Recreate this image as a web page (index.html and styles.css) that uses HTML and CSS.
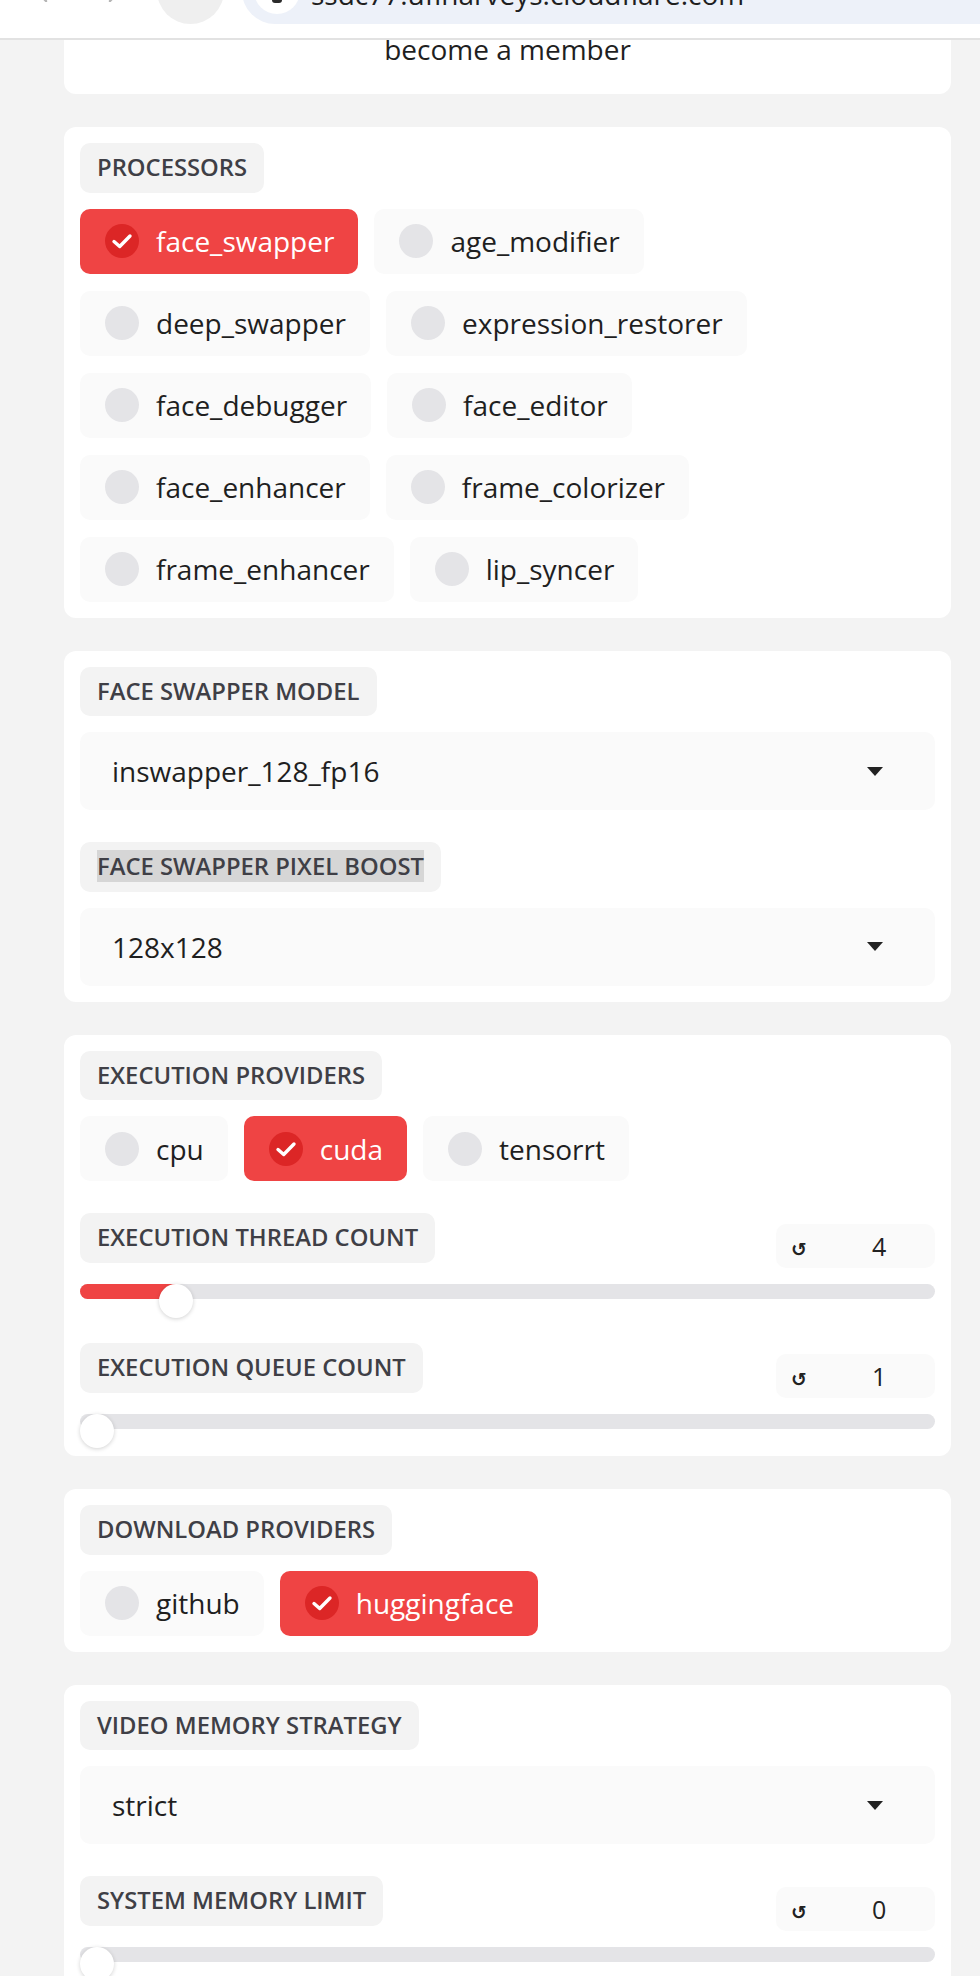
FILE: index.html
```html
<!DOCTYPE html>
<html lang="en">
<head>
<meta charset="utf-8">
<title>FaceFusion</title>
<link rel="stylesheet" href="styles.css">
</head>
<body>
<div class="chrome">
  <svg class="nav nav-back" width="12" height="20" viewBox="0 0 12 20"><path d="M10 1 L2 10 L10 19" fill="none" stroke="#b5b5b5" stroke-width="2.5" stroke-linecap="round" stroke-linejoin="round"/></svg>
  <svg class="nav nav-fwd" width="12" height="20" viewBox="0 0 12 20"><path d="M2 1 L10 10 L2 19" fill="none" stroke="#b5b5b5" stroke-width="2.5" stroke-linecap="round" stroke-linejoin="round"/></svg>
  <div class="reload"><span class="reload-icon"></span></div>
  <div class="urlbar">
    <div class="site-icon"><span class="site-glyph"></span></div>
    <span class="url-text">ssdc77.ufinarveys.cloudflare.com</span>
  </div>
</div>

<main class="page">
  <section class="card card-member">
    <p class="member">become a member</p>
  </section>

  <section class="card">
    <div class="label">PROCESSORS</div>
    <div class="rows">
      <div class="row">
        <div class="choice selected"><span class="dot"><svg width="22" height="22" viewBox="0 0 22 22"><path d="M3 11.5 L8.7 16.5 L19 6" fill="none" stroke="#fff" stroke-width="3.4" stroke-linecap="round" stroke-linejoin="round"/></svg></span><span>face_swapper</span></div>
        <div class="choice"><span class="dot"></span><span>age_modifier</span></div>
      </div>
      <div class="row">
        <div class="choice"><span class="dot"></span><span>deep_swapper</span></div>
        <div class="choice"><span class="dot"></span><span>expression_restorer</span></div>
      </div>
      <div class="row">
        <div class="choice"><span class="dot"></span><span>face_debugger</span></div>
        <div class="choice"><span class="dot"></span><span>face_editor</span></div>
      </div>
      <div class="row">
        <div class="choice"><span class="dot"></span><span>face_enhancer</span></div>
        <div class="choice"><span class="dot"></span><span>frame_colorizer</span></div>
      </div>
      <div class="row">
        <div class="choice"><span class="dot"></span><span>frame_enhancer</span></div>
        <div class="choice"><span class="dot"></span><span>lip_syncer</span></div>
      </div>
    </div>
  </section>

  <section class="card">
    <div class="label">FACE SWAPPER MODEL</div>
    <div class="dropdown"><span>inswapper_128_fp16</span><span class="caret"></span></div>
    <div class="label label-gap"><span class="hl">FACE SWAPPER PIXEL BOOST</span></div>
    <div class="dropdown"><span>128x128</span><span class="caret"></span></div>
  </section>

  <section class="card card-tight">
    <div class="label">EXECUTION PROVIDERS</div>
    <div class="rows">
      <div class="row">
        <div class="choice"><span class="dot"></span><span>cpu</span></div>
        <div class="choice selected"><span class="dot"><svg width="22" height="22" viewBox="0 0 22 22"><path d="M3 11.5 L8.7 16.5 L19 6" fill="none" stroke="#fff" stroke-width="3.4" stroke-linecap="round" stroke-linejoin="round"/></svg></span><span>cuda</span></div>
        <div class="choice"><span class="dot"></span><span>tensorrt</span></div>
      </div>
    </div>
    <div class="slider-block first">
      <div class="slider-head">
        <div class="label">EXECUTION THREAD COUNT</div>
        <div class="numbox"><span class="reset">↺</span><span class="num">4</span></div>
      </div>
      <div class="range">
        <div class="track"><div class="fill" style="width:96px"></div></div>
        <div class="thumb" style="left:79px"></div>
      </div>
    </div>
    <div class="slider-block">
      <div class="slider-head">
        <div class="label">EXECUTION QUEUE COUNT</div>
        <div class="numbox"><span class="reset">↺</span><span class="num">1</span></div>
      </div>
      <div class="range">
        <div class="track"><div class="fill" style="width:0px"></div></div>
        <div class="thumb" style="left:0px"></div>
      </div>
    </div>
  </section>

  <section class="card">
    <div class="label">DOWNLOAD PROVIDERS</div>
    <div class="rows">
      <div class="row">
        <div class="choice"><span class="dot"></span><span>github</span></div>
        <div class="choice selected"><span class="dot"><svg width="22" height="22" viewBox="0 0 22 22"><path d="M3 11.5 L8.7 16.5 L19 6" fill="none" stroke="#fff" stroke-width="3.4" stroke-linecap="round" stroke-linejoin="round"/></svg></span><span>huggingface</span></div>
      </div>
    </div>
  </section>

  <section class="card">
    <div class="label">VIDEO MEMORY STRATEGY</div>
    <div class="dropdown"><span>strict</span><span class="caret"></span></div>
    <div class="slider-block first">
      <div class="slider-head">
        <div class="label">SYSTEM MEMORY LIMIT</div>
        <div class="numbox"><span class="reset">↺</span><span class="num">0</span></div>
      </div>
      <div class="range">
        <div class="track"><div class="fill" style="width:0px"></div></div>
        <div class="thumb" style="left:0px"></div>
      </div>
    </div>
  </section>
</main>
</body>
</html>
```

FILE: styles.css
```css
* { box-sizing: border-box; }

html, body {
  margin: 0;
  padding: 0;
  background: #f3f3f3;
}

body {
  font-family: "Open Sans", "Noto Sans", sans-serif;
  color: #1f1f1f;
}

/* ---------- browser chrome overlay ---------- */
.chrome {
  position: fixed;
  top: 0;
  left: 0;
  right: 0;
  height: 40px;
  background: #fff;
  border-bottom: 2px solid #e2e2e2;
  display: flex;
  align-items: flex-end;
  padding-bottom: 14px;
  overflow: hidden;
  z-index: 10;
}

.nav {
  flex: none;
  margin-bottom: 22px;
}

.nav-back { margin-left: 36px; }
.nav-fwd { margin-left: 60px; }

.reload {
  flex: none;
  width: 67px;
  height: 67px;
  border-radius: 50%;
  background: #efefef;
  margin-left: 37px;
  display: flex;
  align-items: center;
  justify-content: center;
}

.reload-icon {
  width: 18px;
  height: 18px;
  border: 3px solid #b8b8b8;
  border-radius: 50%;
}

.urlbar {
  flex: 1;
  height: 66px;
  margin-left: 18px;
  background: #edf1f9;
  border-radius: 33px 0 0 33px;
  display: flex;
  align-items: center;
  padding-left: 12px;
}

.site-icon {
  flex: none;
  width: 46px;
  height: 46px;
  border-radius: 50%;
  background: #fff;
  display: flex;
  align-items: center;
  justify-content: center;
}

.site-glyph {
  width: 10px;
  height: 14px;
  border-radius: 3px;
  background: #2b2b2b;
  margin-top: 10px;
}

.url-text {
  margin-left: 11px;
  margin-top: 6px;
  font-size: 28px;
  line-height: 28px;
  color: #1f1f1f;
  white-space: nowrap;
}

/* ---------- page ---------- */
.page {
  width: 887px;
  margin-left: 64px;
  display: flex;
  flex-direction: column;
  gap: 33px;
  padding-bottom: 60px;
}

.card {
  background: #fff;
  border-radius: 12px;
  padding: 16px;
  display: flex;
  flex-direction: column;
  align-items: flex-start;
}

.card-tight { padding-bottom: 8px; }

.card-member {
  height: 94px;
  padding: 28px 16px 0;
  align-items: center;
  border-radius: 0 0 12px 12px;
}

.member {
  margin: 0;
  font-size: 28px;
  line-height: 42px;
  color: #1f1f1f;
}

.label {
  display: inline-block;
  padding: 8.25px 17px;
  font-size: 23.8px;
  line-height: 33px;
  font-weight: 600;
  color: #3f3f46;
  background: #f3f3f3;
  border-radius: 10px;
  white-space: nowrap;
}

.label-gap { margin-top: 32px; }

.hl { background: #d6d6d6; }

.rows {
  margin-top: 16px;
  display: flex;
  flex-direction: column;
  gap: 17px;
}

.row {
  display: flex;
  gap: 16px;
}

.choice {
  display: flex;
  align-items: center;
  gap: 17px;
  height: 65px;
  padding: 0 24px 0 25px;
  background: #fafafa;
  border-radius: 10px;
  font-size: 28px;
  line-height: 38px;
  color: #1f1f1f;
  white-space: nowrap;
}

.choice.selected {
  background: #ef4444;
  color: #fff;
}

.dot {
  flex: none;
  width: 34px;
  height: 34px;
  border-radius: 50%;
  background: #e4e4e7;
  display: flex;
  align-items: center;
  justify-content: center;
}

.selected .dot { background: #dc2626; }

.dropdown {
  align-self: stretch;
  margin-top: 16px;
  height: 78px;
  background: #fafafa;
  border-radius: 10px;
  padding: 0 52px 0 32px;
  display: flex;
  align-items: center;
  justify-content: space-between;
  font-size: 28px;
  color: #1f1f1f;
}

.caret {
  width: 0;
  height: 0;
  border-left: 8px solid transparent;
  border-right: 8px solid transparent;
  border-top: 9px solid #222;
}

/* ---------- sliders ---------- */
.slider-block {
  align-self: stretch;
  margin-top: 25px;
}

.slider-block.first { margin-top: 32px; }

.slider-head {
  display: flex;
  justify-content: space-between;
  align-items: flex-start;
  height: 55px;
}

.numbox {
  margin-top: 11px;
  width: 159px;
  height: 44px;
  background: #fafafa;
  border-radius: 10px;
  display: flex;
  align-items: center;
  padding-left: 15px;
}

.reset {
  width: 18px;
  font-family: "DejaVu Sans", sans-serif;
  font-weight: bold;
  font-size: 19px;
  line-height: 20px;
  color: #222;
  margin-top: 6px;
}

.num {
  margin-left: 63px;
  font-size: 25px;
  line-height: 30px;
  color: #222;
}

.range {
  position: relative;
  margin-top: 16px;
  height: 34px;
}

.track {
  margin-top: 10px;
  height: 15px;
  border-radius: 8px;
  background: #e4e4e7;
  overflow: hidden;
}

.fill {
  height: 100%;
  background: #ef4444;
}

.thumb {
  position: absolute;
  top: 0;
  width: 34px;
  height: 34px;
  border-radius: 50%;
  background: #fff;
  box-shadow: 0 1px 4px rgba(0, 0, 0, 0.18);
}
```
